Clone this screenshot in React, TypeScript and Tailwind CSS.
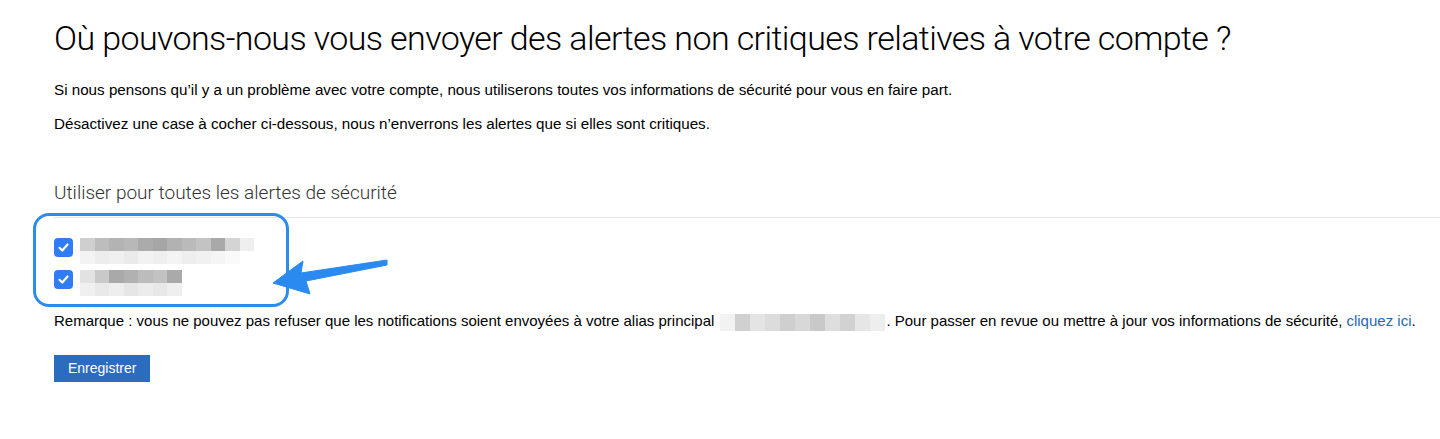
import React from 'react';

// pixelated (blurred) placeholders for masked personal data
const blurA = [
  ['#cfcfcf', '#bdbdbd', '#b3b3b3', '#b8b8b8', '#ababab', '#a6a6a6', '#b2b2b2', '#bababa', '#c3c3c3', '#a9a9a9', '#d4d4d4', '#efefef'],
  ['#f3f3f3', '#ededed', '#f0f0f0', '#eaeaea', '#f2f2f2', '#efefef', '#f4f4f4', '#eeeeee', '#f1f1f1', '#f5f5f5', '#fafafa', '#ffffff'],
];
const blurB = [
  ['#e2e2e2', '#c9c9c9', '#a9a9a9', '#b1b1b1', '#bcbcbc', '#c2c2c2', '#aaaaaa'],
  ['#f0f0f0', '#e9e9e9', '#eeeeee', '#e6e6e6', '#ececec', '#e8e8e8', '#efefef'],
];
const blurMail = [
  ['#f2f2f2', '#d0d0d0', '#e4e4e4', '#dcdcdc', '#cfcfcf', '#d8d8d8', '#c9c9c9', '#dedede', '#d2d2d2', '#e6e6e6', '#eeeeee'],
];

function Pixels({ rows, cell = 14.5, h = 13 }: { rows: string[][]; cell?: number; h?: number }) {
  return (
    <span className="inline-flex flex-col align-middle">
      {rows.map((r, i) => (
        <span key={i} className="flex">
          {r.map((c, j) => (
            <span key={j} style={{ width: cell, height: h, background: c }} />
          ))}
        </span>
      ))}
    </span>
  );
}

function Check() {
  return (
    <span className="w-[19px] h-[19px] rounded-[4px] bg-[#2f7cf6] flex items-center justify-center shrink-0">
      <svg width="13" height="13" viewBox="0 0 13 13">
        <path d="M2.5 6.8 L5.3 9.5 L10.5 3.5" fill="none" stroke="white" strokeWidth="2.2" strokeLinecap="round" strokeLinejoin="round" />
      </svg>
    </span>
  );
}

export default function App() {
  return (
    <div className="relative w-[1440px] h-[439px] overflow-hidden bg-white text-black font-['Helvetica_Neue','Liberation_Sans',Arial,sans-serif]">
      <div className="pl-[54px] pt-[16px]">
        <h1 className="font-['Roboto',sans-serif] text-[34px] font-light leading-[44px] tracking-[-0.6px]">
          Où pouvons-nous vous envoyer des alertes non critiques relatives à votre compte ?
        </h1>
        <p className="mt-[20px] text-[15.2px] leading-[20px]">
          Si nous pensons qu’il y a un problème avec votre compte, nous utiliserons toutes vos informations de sécurité pour vous en faire part.
        </p>
        <p className="mt-[14px] text-[15.2px] leading-[20px]">
          Désactivez une case à cocher ci-dessous, nous n’enverrons les alertes que si elles sont critiques.
        </p>
        <h2 className="mt-[47px] font-['Roboto',sans-serif] text-[19px] font-light leading-[24px] text-[#333]">
          Utiliser pour toutes les alertes de sécurité
        </h2>
      </div>

      <div className="ml-[54px] mt-[12px] border-t border-[#e6e6e6]" />

      <div className="pl-[54px] pt-[20px] flex flex-col gap-[6px]">
        <label className="flex items-start gap-[7px]">
          <Check />
          <Pixels rows={blurA} />
        </label>
        <label className="flex items-start gap-[7px]">
          <Check />
          <Pixels rows={blurB} />
        </label>
      </div>

      <p className="pl-[54px] mt-[15px] text-[15px] leading-[20px] flex items-center">
        <span>Remarque : vous ne pouvez pas refuser que les notifications soient envoyées à votre alias principal</span>
        <span className="ml-[6px] mr-[1px]">
          <Pixels rows={blurMail} cell={15} h={17} />
        </span>
        <span>. Pour passer en revue ou mettre à jour vos informations de sécurité,</span>
        <a className="ml-[4px] text-[#1f68b3]">cliquez ici</a>
        <span>.</span>
      </p>

      <div className="pl-[54px] mt-[24px]">
        <button className="h-[27px] px-[14px] bg-[#2b6cbf] text-white text-[14px] leading-[27px]">Enregistrer</button>
      </div>

      {/* annotation: highlight box + arrow */}
      <div className="absolute left-[33px] top-[213px] w-[256px] h-[94px] rounded-[16px] border-[3px] border-[#2b8ceb]" />
      <svg className="absolute left-0 top-0" width="1440" height="439" style={{ pointerEvents: 'none' }}>
        <polygon
          points="273,283 303,261 301,273 387,260 387,265 306,281 310,294"
          fill="#2a8af0"
          stroke="#2a8af0"
          strokeWidth="1"
          strokeLinejoin="round"
        />
      </svg>
    </div>
  );
}
